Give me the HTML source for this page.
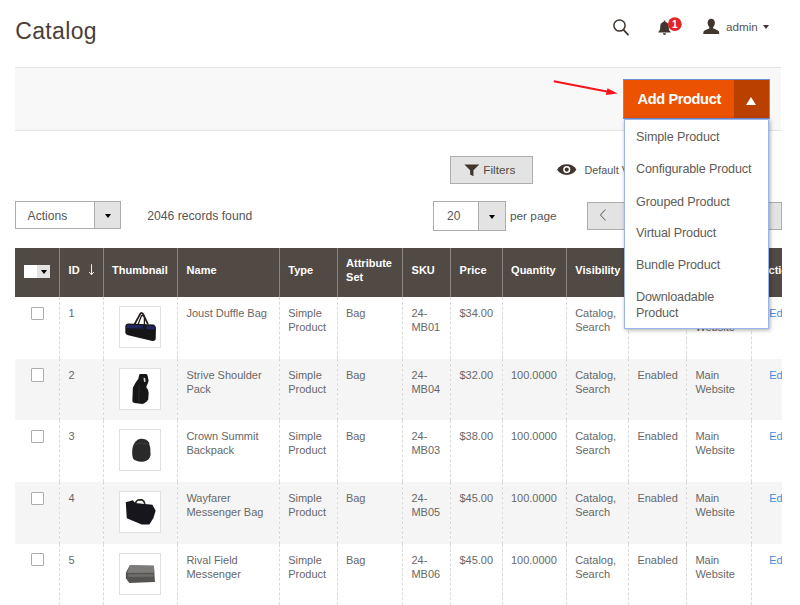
<!DOCTYPE html>
<html lang="en">
<head>
<meta charset="utf-8">
<title>Catalog</title>
<style>
*{box-sizing:border-box;margin:0;padding:0}
html,body{width:800px;height:605px;overflow:hidden;background:#fff}
body{font-family:"Liberation Sans",sans-serif;color:#5a5550;font-size:11px;position:relative}
.abs{position:absolute}
h1{position:absolute;left:15.2px;top:16px;font-size:23px;font-weight:400;color:#4a3f38;line-height:30px;letter-spacing:.35px}
.topbar{position:absolute;left:15px;top:67px;width:766.2px;height:64px;background:#f8f8f8;border-top:1px solid #e3e3e3;border-bottom:1px solid #e3e3e3}
.user{position:absolute;left:726px;top:19.5px;font-size:11.7px;color:#555;line-height:14px}
.addbtn{position:absolute;left:622.5px;top:79px;width:147.5px;height:39.5px;background:#eb5202;border:1px solid #6f8fd8;color:#fff;font-weight:700;font-size:14.6px;letter-spacing:-.38px;line-height:39px;padding-left:14px}
.addbtn .tog{position:absolute;right:0;top:0;width:35.5px;height:37.5px;background:#ba4000}
.addbtn .tog:after{content:"";position:absolute;left:12.7px;top:16.6px;border-left:5.5px solid transparent;border-right:5.5px solid transparent;border-bottom:8px solid #fff}
.menu{position:absolute;left:623.5px;top:119px;width:145.5px;height:209.5px;background:#fff;border:1px solid #9db4e8;box-shadow:1px 1px 4px rgba(0,0,0,.35);z-index:5;font-size:12.6px;letter-spacing:-.15px;color:#625c57}
.menu li{list-style:none;position:absolute;left:11.5px;line-height:15.6px;white-space:nowrap}
.btn{position:absolute;background:#e3e3e3;border:1px solid #adadad}
.filters{left:450px;top:156px;width:83px;height:27.5px;font-size:11.8px;color:#514943;line-height:27px;padding-left:32.2px;font-weight:400}
.sel{position:absolute;background:#fff;border:1px solid #adadad;font-size:11px;line-height:26px;color:#555}
.sel .dd{position:absolute;right:0;top:0;bottom:0;background:#e3e3e3;border-left:1px solid #adadad}
.sel .dd:after{content:"";position:absolute;left:50%;top:50%;margin:-1.2px 0 0 -2.6px;border-left:3px solid transparent;border-right:3px solid transparent;border-top:4px solid #000}
table{position:absolute;left:15px;top:247.5px;width:766.5px;border-collapse:collapse;table-layout:fixed;font-size:11px}
th{position:relative;background:#514943;color:#fff;font-weight:700;text-align:left;height:49.8px;padding:0 0 5px 8.6px;border-left:1px solid #8a837f;font-size:11px;line-height:14.3px;vertical-align:middle;overflow:hidden;white-space:nowrap}
th:first-child,td:first-child{border-left:0}
td{height:61.6px;vertical-align:top;padding:9px 0 0 8.4px;border-left:1px dashed #dadada;line-height:14px;color:#686868;overflow:hidden}
tbody tr:nth-child(even) td{background:#f5f5f5}
.cb{display:block;width:13.3px;height:13.3px;border:1px solid #adadad;background:#fff;border-radius:1px;margin:.5px 0 0 7.6px}
.th{display:block;width:42px;height:42px;border:1px solid #e0e0e0;background:#fff;margin:0 0 0 7.4px;position:relative;top:0}
.th svg{display:block;width:40px;height:40px}
a{color:#3f8fdc;text-decoration:none}
</style>
</head>
<body>
<svg width="0" height="0" style="position:absolute"><defs><filter id="bl" x="-10%" y="-10%" width="120%" height="120%"><feGaussianBlur stdDeviation="0.45"/></filter></defs></svg>
<h1>Catalog</h1>

<svg class="abs" style="left:611px;top:17px" width="22" height="22" viewBox="0 0 22 22"><circle cx="8.5" cy="8.5" r="5.6" fill="none" stroke="#41362f" stroke-width="1.5"/><path d="M12.6 12.8 L17 17.6" stroke="#41362f" stroke-width="1.8" stroke-linecap="round"/></svg>

<svg class="abs" style="left:656px;top:15px" width="28" height="24" viewBox="0 0 28 24"><g transform="translate(-0.3 0) scale(1.1)"><path d="M8 6.2c2.6 0 3.9 2 3.9 4.6 0 2.3.5 3.4 1.6 4.4v.6H2.500v-.6c1.100-1 1.600-2.100 1.600-4.400 0-2.600 1.300-4.600 3.900-4.600z" fill="#41362f"/><rect x="7.300" y="5" width="1.400" height="2" fill="#41362f"/><path d="M6.600 16.600h2.800c0 .9-.6 1.500-1.400 1.500s-1.400-.6-1.400-1.500z" fill="#41362f"/></g><circle cx="18.800" cy="9.200" r="6.900" fill="#e22626"/><text x="18.800" y="12.900" font-family="Liberation Sans, sans-serif" font-size="10" font-weight="700" fill="#fff" text-anchor="middle">1</text></svg>

<svg class="abs" style="left:700.7px;top:17.1px" width="20.5" height="20.5" viewBox="0 0 18 18"><path d="M9 1.500c2 0 3.200 1.500 3.200 3.600 0 1.700-.7 3-1.500 3.700v1.300c1.600.6 4.400 1.500 4.900 2.500.3.600.4 1.700.4 2.400H2c0-.7.100-1.800.4-2.400.5-1 3.300-1.900 4.900-2.500V8.800C6.500 8.100 5.800 6.800 5.800 5.100c0-2.100 1.200-3.600 3.200-3.600z" fill="#41362f"/></svg>
<div class="user">admin</div>
<div class="abs" style="left:763px;top:24.8px;border-left:3.5px solid transparent;border-right:3.5px solid transparent;border-top:4px solid #41362f"></div>

<div class="topbar"></div>

<svg class="abs" style="left:550px;top:74px" width="72" height="26" viewBox="0 0 72 26"><path d="M3.750 7.250 L58 17.700" stroke="#f5141c" stroke-width="1.900" fill="none"/><path d="M67.500 19.500 L55.800 21 L57.500 14.200 Z" fill="#f5141c"/></svg>

<div class="addbtn">Add Product<span class="tog"></span></div>

<ul class="menu">
<li style="top:10px">Simple Product</li>
<li style="top:41.9px">Configurable Product</li>
<li style="top:74.6px">Grouped Product</li>
<li style="top:106.3px">Virtual Product</li>
<li style="top:138.1px">Bundle Product</li>
<li style="top:170px">Downloadable<br>Product</li>
</ul>

<div class="btn filters"><svg class="abs" style="left:13.3px;top:7px" width="15.6" height="13" viewBox="0 0 14 13" preserveAspectRatio="none"><path d="M0.300 0.500h13.400L8.500 6.300v6l-3-1.800V6.300z" fill="#41362f"/></svg>Filters</div>

<svg class="abs" style="left:555.5px;top:161.4px" width="21.5" height="17.2" viewBox="0 0 20 16"><path d="M1 8c2-3.400 5.200-5 9-5s7 1.600 9 5c-2 3.400-5.200 5-9 5s-7-1.600-9-5z" fill="#41362f"/><circle cx="10" cy="8" r="3.300" fill="#fff"/><circle cx="10" cy="8" r="1.900" fill="#41362f"/></svg>
<div class="abs" style="left:584.5px;top:163px;font-size:10.8px;line-height:14px;color:#555;white-space:nowrap">Default View</div>

<div class="sel" style="left:15px;top:201px;width:106px;height:28px;padding-left:11.6px;font-size:12.1px;line-height:28px">Actions<span class="dd" style="width:26.3px"></span></div>
<div class="abs" style="left:147.2px;top:209px;font-size:12.2px;line-height:14px;color:#555;white-space:nowrap">2046 records found</div>

<div class="sel" style="left:433px;top:201px;width:73px;height:29.5px;padding-left:13px;line-height:29.5px;font-size:12px">20<span class="dd" style="width:27.500px"></span></div>
<div class="abs" style="left:510px;top:208.500px;font-size:11.800px;line-height:14px;color:#555;white-space:nowrap">per page</div>

<div class="btn" style="left:587px;top:201.500px;width:40px;height:28px"></div>
<svg class="abs" style="left:598px;top:208px" width="10" height="14" viewBox="0 0 10 14"><path d="M7.500 1.500 L2.500 7 L7.500 12.500" fill="none" stroke="#777" stroke-width="1.100"/></svg>
<div class="btn" style="left:760px;top:201.500px;width:21.500px;height:28px;border-left:0"></div>

<table>
<colgroup><col style="width:44.5px"><col style="width:43.5px"><col style="width:74.5px"><col style="width:101.75px"><col style="width:57.75px"><col style="width:65.5px"><col style="width:48px"><col style="width:51.5px"><col style="width:64.25px"><col style="width:62.25px"><col style="width:58px"><col style="width:65px"><col style="width:30px"></colgroup>
<thead><tr>
<th><span class="abs" style="left:9.2px;top:17.2px;width:26px;height:13.5px;background:#e3e3e3"><span class="abs" style="left:0;top:0;width:13px;height:13.5px;background:#fff"></span><span class="abs" style="left:16.5px;top:5px;border-left:3px solid transparent;border-right:3px solid transparent;border-top:4px solid #000"></span></span></th>
<th>ID<svg class="abs" style="left:28.3px;top:16.8px" width="7" height="12" viewBox="0 0 7 12"><path d="M3.5 0.300V10.500M1.200 8 L3.500 10.800 L5.800 8" fill="none" stroke="#fff" stroke-width="0.900"/></svg></th><th>Thumbnail</th><th>Name</th><th>Type</th><th>Attribute<br>Set</th><th>SKU</th><th>Price</th><th>Quantity</th><th>Visibility</th><th>Status</th><th>Websites</th><th>Action</th>
</tr></thead>
<tbody>
<tr><td><i class="cb"></i></td><td>1</td><td><i class="th"><svg viewBox="1 1 39.5 39.5"><g filter="url(#bl)"><path d="M15.400 18 L21.300 7.300 Q22.500 6.300 23.600 7.700 L28.600 18" fill="none" stroke="#221e1c" stroke-width="1.700"/><path d="M18.900 18 L22.300 9.300 L25.100 10 L25.100 19" fill="none" stroke="#221e1c" stroke-width="1.300"/><path d="M8.700 17.400 L34 18.200 Q36.300 19 36.500 21.500 L36.200 33 Q35 34.600 33 34.500 L8.200 28.600 Q6.300 28 6.250 26 L6.250 19.600 Q6.800 17.600 8.700 17.400Z" fill="#141418"/><path d="M8 18.600 L23.500 19 L23.500 22.200 L7.200 21.900Z" fill="#22285c"/><path d="M27 19.600 L35 19.900 L35.300 23.200 L27 22.900Z" fill="#22285c"/></g></svg></i></td><td>Joust Duffle Bag</td><td>Simple Product</td><td>Bag</td><td>24-MB01</td><td>$34.00</td><td></td><td>Catalog, Search</td><td>Enabled</td><td>Main Website</td><td style="padding-left:17.2px"><a>Edit</a></td></tr>
<tr><td><i class="cb"></i></td><td>2</td><td><i class="th"><svg viewBox="1 1 39.5 39.5"><g filter="url(#bl)"><path d="M21 6 L26.800 6 Q28 6.200 28.300 8 L29.300 12.700 Q28.500 15.500 26.900 18.700 Q29.200 21.500 29.300 24.600 L28.900 31 Q27 34.500 23.600 35.500 L15.200 34.500 Q13.300 33.800 13.200 32.500 L13.700 19.600 Q16 14.500 19.100 10.700 L19.900 7 Q20.200 6.100 21 6Z" fill="#161617"/><path d="M24.200 9.600 L25.900 9.800 L26.300 13.500 L24.700 13.800Z" fill="#cfcfcf"/><path d="M20 17 L19.500 33" stroke="#3a3a3a" stroke-width="0.600" fill="none"/></g></svg></i></td><td>Strive Shoulder Pack</td><td>Simple Product</td><td>Bag</td><td>24-MB04</td><td>$32.00</td><td>100.0000</td><td>Catalog, Search</td><td>Enabled</td><td>Main Website</td><td style="padding-left:17.2px"><a>Edit</a></td></tr>
<tr><td><i class="cb"></i></td><td>3</td><td><i class="th"><svg viewBox="1 1 39.5 39.5"><g filter="url(#bl)"><path d="M21 9.700 Q27 9.500 29.500 13 Q31.500 18.500 31.200 25.500 Q30.500 31 25 32.100 Q17 33 14 29.500 Q12.200 24.500 13.500 18 Q15.500 11 21 9.700Z" fill="#2b2b2c"/><path d="M16 16 Q21 12.500 27.500 15" stroke="#444" stroke-width="0.700" fill="none"/></g></svg></i></td><td>Crown Summit Backpack</td><td>Simple Product</td><td>Bag</td><td>24-MB03</td><td>$38.00</td><td>100.0000</td><td>Catalog, Search</td><td>Enabled</td><td>Main Website</td><td style="padding-left:17.2px"><a>Edit</a></td></tr>
<tr><td><i class="cb"></i></td><td>4</td><td><i class="th"><svg viewBox="1 1 39.5 39.5"><g filter="url(#bl)"><path d="M16.200 12 Q17.500 9 20 8.700 L23 8.800 Q24.800 9.500 25.600 12.700" fill="none" stroke="#2a221e" stroke-width="1.600"/><path d="M6.700 11.200 L13.700 9.200 L16 11.800 L33 13.700 L36.200 19.400 L34 26.600 L30 33 L22.500 33 L7.700 27 Z" fill="#18181a"/></g></svg></i></td><td>Wayfarer Messenger Bag</td><td>Simple Product</td><td>Bag</td><td>24-MB05</td><td>$45.00</td><td>100.0000</td><td>Catalog, Search</td><td>Enabled</td><td>Main Website</td><td style="padding-left:17.2px"><a>Edit</a></td></tr>
<tr><td><i class="cb"></i></td><td>5</td><td><i class="th"><svg viewBox="1 1 39.5 39.5"><g filter="url(#bl)"><path d="M10.700 12.200 L34.500 12.700 L35.500 28.600 L10.200 29.600 L6.800 25 L6.800 19.500 Z" fill="#555351"/><path d="M10.700 12.200 L34.500 12.700 L34.900 19.500 L8 19.800 Z" fill="#7e7c7a"/><path d="M9 21 L34 21 L34 23.500 L9 23.500Z" fill="#6f6d6b"/></g></svg></i></td><td>Rival Field Messenger</td><td>Simple Product</td><td>Bag</td><td>24-MB06</td><td>$45.00</td><td>100.0000</td><td>Catalog, Search</td><td>Enabled</td><td>Main Website</td><td style="padding-left:17.2px"><a>Edit</a></td></tr>
</tbody>
</table>
</body>
</html>
